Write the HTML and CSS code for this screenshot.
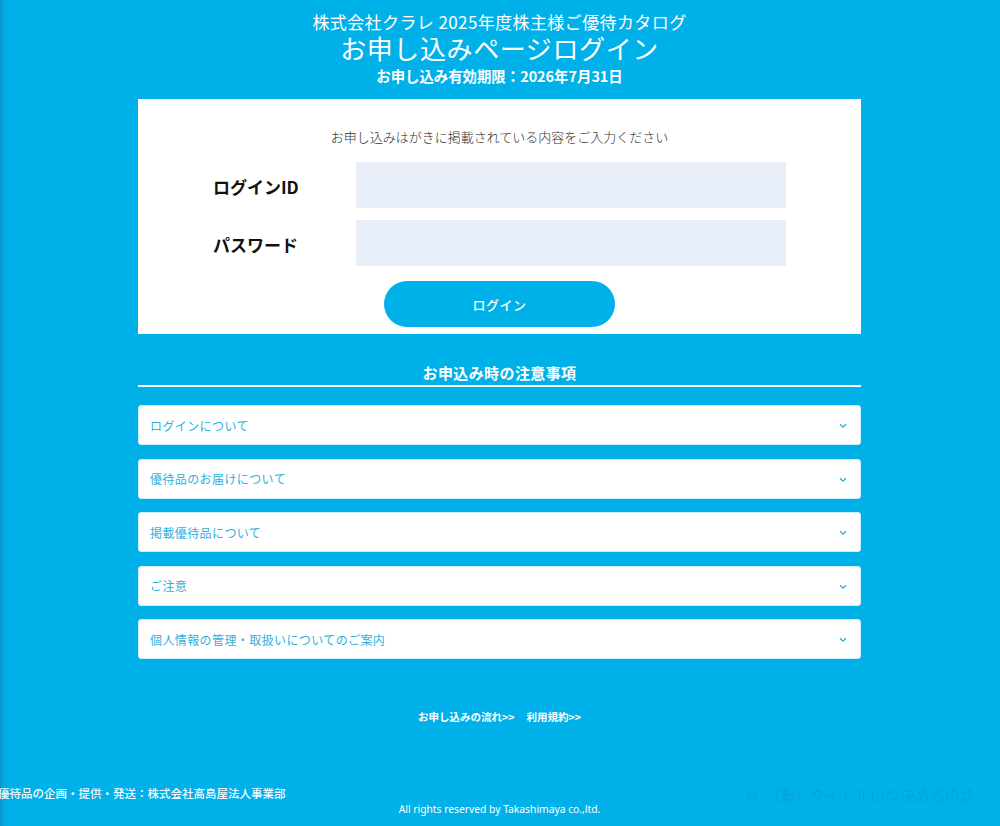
FILE: index.html
```html
<!DOCTYPE html>
<html lang="ja">
<head>
<meta charset="utf-8">
<title>お申し込みページログイン</title>
<link rel="stylesheet" href="styles.css">
</head>
<body>
<div class="page">
  <header class="head">
    <p class="head-sub">株式会社クラレ 2025年度株主様ご優待カタログ</p>
    <h1 class="head-title">お申し込みページログイン</h1>
    <p class="head-limit">お申し込み有効期限：2026年7月31日</p>
  </header>

  <section class="card">
    <p class="card-lead">お申し込みはがきに掲載されている内容をご入力ください</p>
    <div class="field">
      <label class="field-label">ログインID</label>
      <div class="field-input"></div>
    </div>
    <div class="field">
      <label class="field-label">パスワード</label>
      <div class="field-input"></div>
    </div>
    <div class="btn-wrap"><button class="btn">ログイン</button></div>
  </section>

  <section class="notes">
    <h2 class="notes-title">お申込み時の注意事項</h2>
    <div class="acc-list">
      <div class="acc"><span>ログインについて</span><svg class="chev" viewBox="0 0 8 6" width="8" height="6"><polyline points="1,1.2 4,4.2 7,1.2"/></svg></div>
      <div class="acc"><span>優待品のお届けについて</span><svg class="chev" viewBox="0 0 8 6" width="8" height="6"><polyline points="1,1.2 4,4.2 7,1.2"/></svg></div>
      <div class="acc"><span>掲載優待品について</span><svg class="chev" viewBox="0 0 8 6" width="8" height="6"><polyline points="1,1.2 4,4.2 7,1.2"/></svg></div>
      <div class="acc"><span>ご注意</span><svg class="chev" viewBox="0 0 8 6" width="8" height="6"><polyline points="1,1.2 4,4.2 7,1.2"/></svg></div>
      <div class="acc"><span>個人情報の管理・取扱いについてのご案内</span><svg class="chev" viewBox="0 0 8 6" width="8" height="6"><polyline points="1,1.2 4,4.2 7,1.2"/></svg></div>
    </div>
  </section>

  <nav class="links"><a>お申し込みの流れ&gt;&gt;</a><a>利用規約&gt;&gt;</a></nav>

  <footer class="foot">
    <p class="foot-company">優待品の企画・提供・発送：株式会社高島屋法人事業部</p>
    <p class="foot-copy">All rights reserved by Takashimaya co.,ltd.</p>
  </footer>
</div>
<div class="watermark">©　（新）タイトルいつ決めるのさ</div>
</body>
</html>
```

FILE: styles.css
```css
* { box-sizing: border-box; }
html, body { margin: 0; padding: 0; }
body {
  background: linear-gradient(to right, #0596c6 0, #02a8df 4px, #00b1e9 9px, #00b1e9 100%);
  font-family: "Noto Sans CJK JP", "Noto Sans", sans-serif;
  color: #fff;
  min-height: 826px;
  overflow: hidden;
}
p, h1, h2 { margin: 0; }
.page { width: 999px; }

.head { padding-top: 11px; text-align: center; }
.head-sub { font-size: 17px; line-height: 22px; font-weight: 400; letter-spacing: 0.4px; }
.head-title { font-size: 26px; line-height: 30px; font-weight: 400; letter-spacing: 0.6px; }
.head-limit { font-size: 14.4px; line-height: 20px; font-weight: 700; margin-top: 3px; }

.card {
  width: 723px;
  margin: 13px auto 0;
  background: #fff;
  padding: 28px 0 7px;
}
.card-lead {
  text-align: center;
  font-size: 13px;
  line-height: 20px;
  font-weight: 300;
  color: #333;
}
.field {
  display: flex;
  align-items: center;
  margin: 15px 0 0 75px;
}
.field + .field { margin-top: 12px; }
.field-label {
  width: 143px;
  font-size: 17px;
  font-weight: 700;
  color: #111;
  padding-top: 2px;
}
.field-input {
  width: 430px;
  height: 46px;
  background: #e8eef8;
}
.btn-wrap { display: flex; justify-content: center; margin-top: 15px; }
.btn {
  width: 231px;
  height: 46px;
  border: 0;
  border-radius: 23px;
  background: #00b1e9;
  color: #fff;
  font-family: "Noto Sans CJK JP", sans-serif;
  font-size: 13px;
  font-weight: 500;
  letter-spacing: 0.5px;
}

.notes { width: 723px; margin: 28px auto 0; }
.notes-title {
  text-align: center;
  font-size: 15px;
  line-height: 22px;
  font-weight: 700;
  padding-bottom: 1px;
  border-bottom: 2px solid #fff;
  letter-spacing: 0.4px;
}
.acc-list { display: flex; flex-direction: column; gap: 13.5px; margin-top: 18px; }
.acc {
  height: 40px;
  background: #fff;
  border-radius: 3px;
  border: 1px solid #cdeefa;
  display: flex;
  align-items: center;
  justify-content: space-between;
  padding: 0 13px 0 11px;
  color: #2fb0dc;
  font-size: 12px;
  font-weight: 400;
  letter-spacing: 0.4px;
}
.chev { fill: none; stroke: #2fa9d8; stroke-width: 1.3; margin-top: 2px; }

.links {
  display: flex;
  justify-content: center;
  gap: 12px;
  margin-top: 50px;
  font-size: 10.5px;
  line-height: 16px;
  font-weight: 700;
}
.links a { color: #fff; }

.foot { margin-top: 60px; }
.foot-company {
  font-size: 11.5px;
  line-height: 16px;
  font-weight: 500;
  margin-left: -2px;
  color: #f2fbff;
}
.foot-copy {
  text-align: center;
  font-family: "Noto Sans", sans-serif;
  font-size: 10.3px;
  line-height: 14px;
  letter-spacing: 0;
  margin-top: 1px;
}
.watermark {
  position: fixed;
  right: 25px;
  top: 784px;
  font-size: 15px;
  line-height: 22px;
  font-weight: 300;
  color: rgba(0, 80, 130, 0.2);
}
```
